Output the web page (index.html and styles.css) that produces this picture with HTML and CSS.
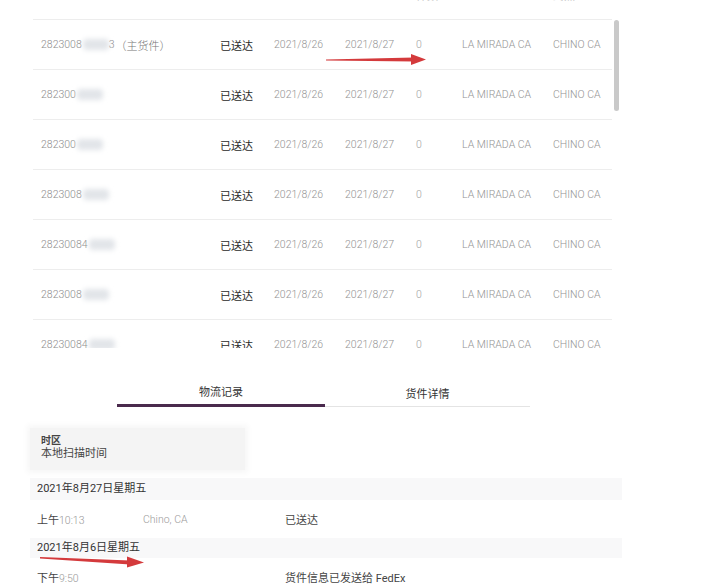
FILE: index.html
```html
<!DOCTYPE html>
<html lang="zh">
<head>
<meta charset="utf-8">
<title>物流记录</title>
<link rel="stylesheet" href="styles.css">
</head>
<body>
<div class="page">
  <div class="table-wrap">
    <div class="table">
      <div class="row head">
        <span class="hc"></span><span class="hc"></span><span class="hc"></span><span class="hc"></span>
        <span class="hc"><i>件数</i></span><span class="hc"></span><span class="hc"><i>终点</i></span>
      </div>
      <div class="row">
        <span class="id">2823008<b class="blur"></b>3<em>（主货件）</em></span>
        <span class="st">已送达</span><span class="d">2021/8/26</span><span class="d">2021/8/27</span><span class="n">0</span><span class="c">LA MIRADA CA</span><span class="c">CHINO CA</span>
      </div>
      <div class="row">
        <span class="id">282300<b class="blur"></b></span>
        <span class="st">已送达</span><span class="d">2021/8/26</span><span class="d">2021/8/27</span><span class="n">0</span><span class="c">LA MIRADA CA</span><span class="c">CHINO CA</span>
      </div>
      <div class="row">
        <span class="id">282300<b class="blur"></b></span>
        <span class="st">已送达</span><span class="d">2021/8/26</span><span class="d">2021/8/27</span><span class="n">0</span><span class="c">LA MIRADA CA</span><span class="c">CHINO CA</span>
      </div>
      <div class="row">
        <span class="id">2823008<b class="blur"></b></span>
        <span class="st">已送达</span><span class="d">2021/8/26</span><span class="d">2021/8/27</span><span class="n">0</span><span class="c">LA MIRADA CA</span><span class="c">CHINO CA</span>
      </div>
      <div class="row">
        <span class="id">28230084<b class="blur"></b></span>
        <span class="st">已送达</span><span class="d">2021/8/26</span><span class="d">2021/8/27</span><span class="n">0</span><span class="c">LA MIRADA CA</span><span class="c">CHINO CA</span>
      </div>
      <div class="row">
        <span class="id">2823008<b class="blur"></b></span>
        <span class="st">已送达</span><span class="d">2021/8/26</span><span class="d">2021/8/27</span><span class="n">0</span><span class="c">LA MIRADA CA</span><span class="c">CHINO CA</span>
      </div>
      <div class="row">
        <span class="id">28230084<b class="blur"></b></span>
        <span class="st">已送达</span><span class="d">2021/8/26</span><span class="d">2021/8/27</span><span class="n">0</span><span class="c">LA MIRADA CA</span><span class="c">CHINO CA</span>
      </div>
    </div>
    <div class="scrollbar"><div class="thumb"></div></div>
  </div>

  <div class="tabs">
    <div class="tab active">物流记录</div>
    <div class="tab">货件详情</div>
  </div>

  <div class="tz">
    <div class="tz-label">时区</div>
    <div class="tz-value">本地扫描时间</div>
  </div>

  <div class="log">
    <div class="day">2021年8月27日星期五</div>
    <div class="ev">
      <span class="time">上午<span class="lt">10:13</span></span>
      <span class="loc">Chino, CA</span>
      <span class="desc">已送达</span>
    </div>
    <div class="day day-2">2021年8月6日星期五</div>
    <div class="ev">
      <span class="time">下午<span class="lt">9:50</span></span>
      <span class="loc"></span>
      <span class="desc">货件信息已发送给 FedEx</span>
    </div>
  </div>

  <svg class="arrow arrow-1" width="104" height="14" viewBox="0 0 104 14">
    <polygon points="0,6.6 88,4.6 88,8.6 0,7.6" fill="#d43a3c"/>
    <polygon points="85,1 100,6.6 85,12" fill="#d43a3c"/>
  </svg>
  <svg class="arrow arrow-2" width="108" height="16" viewBox="0 0 108 16">
    <polygon points="0,3 90,6.5 90,10.5 0,4.5" fill="#d43a3c"/>
    <polygon points="87,2.5 104,8.5 87,13.5" fill="#d43a3c"/>
  </svg>
</div>
</body>
</html>
```

FILE: styles.css
```css
* { box-sizing: border-box; }

html, body {
  margin: 0;
  padding: 0;
  background: #ffffff;
}

body {
  font-family: "Roboto", "Noto Sans CJK SC", sans-serif;
  font-size: 10.5px;
  color: #333;
}

.page {
  position: relative;
  width: 720px;
  height: 586px;
  overflow: hidden;
}

.table-wrap {
  display: flex;
  margin-left: 33px;
  width: 588px;
  height: 348px;
  overflow: hidden;
}

.table {
  width: 579px;
}

.row {
  display: grid;
  grid-template-columns: 179px 54px 71px 71px 46px 91px 1fr;
  align-items: center;
  height: 50px;
  padding-left: 8px;
  border-bottom: 1px solid #ededed;
  white-space: nowrap;
}

.row.head {
  height: 20px;
  align-items: start;
  overflow: hidden;
}

.hc i {
  display: block;
  font-style: normal;
  font-size: 11px;
  line-height: 14px;
  margin-top: -10px;
  color: #c8c8c8;
}

.id {
  color: #8c8c8c;
  font-weight: 300;
  display: flex;
  align-items: center;
}

.id em {
  font-style: normal;
  color: #777;
  font-size: 11px;
  margin-left: 1px;
}

.blur {
  display: inline-block;
  width: 26px;
  height: 11px;
  background: #e2e5e9;
  border-radius: 4px;
  filter: blur(2.5px);
  margin-left: 1px;
}

.st {
  font-family: "Noto Sans CJK SC", sans-serif;
  font-size: 11px;
  color: #2a2a2a;
}

.d, .c {
  color: #939393;
  font-weight: 300;
}

.n {
  color: #a3a3a3;
  font-weight: 300;
}

.scrollbar {
  width: 7px;
  margin-left: 2px;
  padding-top: 20px;
}

.thumb {
  width: 5px;
  height: 91px;
  background: #c9c9c9;
  border-radius: 3px;
}

.tabs {
  display: flex;
  align-items: flex-end;
  margin: 36px 0 0 117px;
  width: 413px;
}

.tab {
  flex: 1;
  text-align: center;
  font-family: "Noto Sans CJK SC", sans-serif;
  font-size: 11px;
  line-height: 14px;
  color: #333;
  padding-bottom: 6px;
  border-bottom: 1px solid #e4e4e4;
}

.tab.active {
  flex: 0 0 208px;
  border-bottom: 3px solid #4a2a4d;
}

.tz {
  margin: 21px 0 0 30px;
  width: 215px;
  padding: 5px 11px 11px;
  background: #f4f4f4;
  box-shadow: 0 0 6px 3px #f7f7f7;
}

.tz-label {
  font-family: "Noto Sans CJK SC", sans-serif;
  font-size: 10px;
  line-height: 13px;
  font-weight: 700;
  color: #444;
}

.tz-value {
  font-family: "Noto Sans CJK SC", sans-serif;
  font-size: 11px;
  line-height: 13px;
  color: #444;
}

.log {
  margin: 8px 0 0 30px;
  width: 592px;
}

.day {
  height: 22px;
  line-height: 22px;
  padding-left: 7px;
  background: #f8f8f9;
  font-size: 11px;
  color: #333;
}

.day.day-2 {
  height: 20px;
  line-height: 20px;
}

.ev {
  display: grid;
  grid-template-columns: 106px 142px 1fr;
  align-items: center;
  height: 38px;
  padding-left: 7px;
  font-size: 11px;
  color: #444;
}

.time { color: #444; }

.lt, .loc {
  color: #999;
  font-weight: 300;
  font-size: 10.5px;
}

.desc { color: #444; }

.arrow {
  position: absolute;
}

.arrow-1 {
  left: 326px;
  top: 53px;
}

.arrow-2 {
  left: 40px;
  top: 554px;
}
```
